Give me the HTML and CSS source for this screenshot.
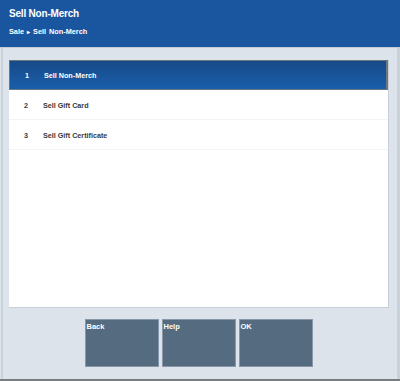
FILE: index.html
```html
<!DOCTYPE html>
<html lang="en">
<head>
  <meta charset="UTF-8">
  <title>Sell Non-Merch</title>
  <link rel="stylesheet" href="styles.css">
</head>
<body>
  <div class="frame">
    <div class="header">
      <div class="title">Sell Non-Merch</div>
      <div class="crumbs">Sale <span class="arrow">&#9656;</span> Sell Non-Merch</div>
    </div>

    <div class="main">
      <div class="list">
        <div class="row selected"><span class="num">1</span><span class="label">Sell Non-Merch</span></div>
        <div class="row"><span class="num">2</span><span class="label">Sell Gift Card</span></div>
        <div class="row"><span class="num">3</span><span class="label">Sell Gift Certificate</span></div>
      </div>

      <div class="buttons">
        <button class="key">Back</button>
        <button class="key">Help</button>
        <button class="key">OK</button>
      </div>
    </div>
  </div>
</body>
</html>
```

FILE: styles.css
```css
html, body {
  margin: 0;
  padding: 0;
}

body {
  width: 400px;
  height: 381px;
  font-family: 'Liberation Sans', Arial, sans-serif;
  font-weight: bold;
  background: #dce3ea;
}

.frame {
  height: 379px;
  border-bottom: 2px solid #7a7d80;
  display: flex;
  flex-direction: column;
}

.header {
  height: 48px;
  background: #1a569f;
  color: #fff;
  padding: 0 9px;
  box-sizing: border-box;
  border-bottom: 1px solid #c4ccd4;
}

.title {
  font-size: 10px;
  letter-spacing: -0.2px;
  padding-top: 8px;
  height: 17px;
}

.crumbs {
  font-size: 7.3px;
  padding-top: 2px;
  word-spacing: 1px;
}

.arrow {
  font-size: 6px;
}

.main {
  flex: 1;
  border-left: 2px solid #c9d1d9;
  border-right: 3px solid #c9d1d9;
  margin-left: 1px;
  padding: 12px 8px 0 6px;
  display: flex;
  flex-direction: column;
}

.list {
  height: 247px;
  background: #fff;
  border-bottom: 1px solid #c8cfd6;
  border-right: 1px solid #c8cfd6;
}

.row {
  height: 30px;
  display: flex;
  align-items: center;
  padding-top: 2px;
  font-size: 7.2px;
  color: #3a3a3a;
  border-bottom: 1px solid #f2f3f5;
  box-sizing: border-box;
}

.row.selected {
  color: #fff;
  padding-top: 1px;
  background: linear-gradient(#174a87, #1a5eac);
  border: 1px solid #6c7680;
  border-right-width: 2px;
}

.num {
  width: 19px;
  padding-left: 15px;
}

.buttons {
  display: flex;
  justify-content: center;
  gap: 3px;
  padding-top: 11px;
  padding-right: 1px;
}

.key {
  width: 74px;
  height: 48px;
  background: #546b80;
  border: 1px solid #8898a8;
  color: #fff;
  font-family: inherit;
  font-weight: bold;
  font-size: 7.5px;
  text-align: left;
  display: flex;
  align-items: flex-start;
  padding: 2px 1px;
  margin: 0;
}
```
